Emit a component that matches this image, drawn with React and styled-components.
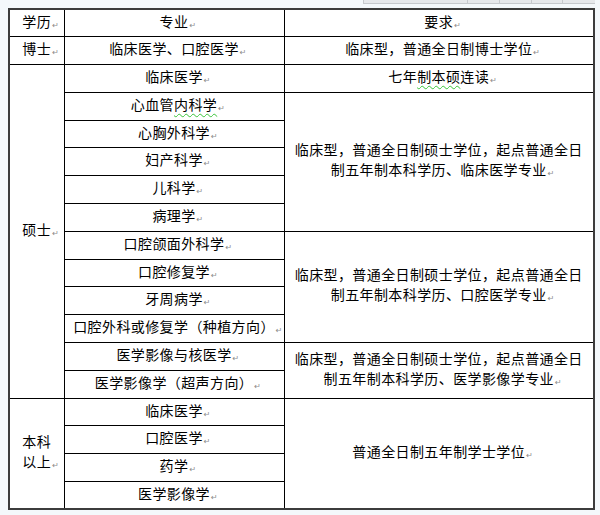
import styled, { createGlobalStyle } from 'styled-components'

const GlobalStyle = createGlobalStyle`
  html, body {
    margin: 0;
    padding: 0;
    background: #f4f8fb;
  }
  body {
    font-family: "Noto Sans CJK SC", "Noto Sans", sans-serif;
  }
`

const Page = styled.div`
  width: 600px;
  height: 515px;
  overflow: hidden;
`

const Ruler = styled.div`
  display: flex;
  height: 4px;
  width: 232px;
  margin-left: 363px;
`

const RulerCell = styled.div`
  flex: 0 0 ${(p) => p.$w}px;
  box-sizing: border-box;
  background: #e6e8eb;
  border-left: 1px solid #c6c9cd;
  border-bottom: 1px solid #c6c9cd;
`

const Table = styled.table`
  margin: 4px 0 0 8px;
  width: 585px;
  border-collapse: collapse;
  table-layout: fixed;
  border: 2px solid #3c3c3c;
`

const Row = styled.tr`
  height: 27.8px;
`

const Cell = styled.td`
  border: 1px solid #000;
  padding: 0 7px;
  text-align: center;
  vertical-align: middle;
  font-size: 14px;
  letter-spacing: 0.4px;
  line-height: 20px;
  color: #000;
  background: #fff;
`

const Squiggle = styled.span`
  text-decoration: underline wavy #39c439;
  text-decoration-thickness: 1px;
  text-underline-offset: 3px;
`

const Mark = styled.span`
  display: inline-block;
  width: 0;
  white-space: nowrap;
  font-family: "DejaVu Sans", sans-serif;
  font-size: 8px;
  letter-spacing: 0;
  color: #8c8c8c;
  vertical-align: -1px;
  &::before {
    content: "↵";
    padding-left: 1px;
  }
`

const Text = ({ children }) => (
  <>
    {children}
    <Mark />
  </>
)

const masterClinical = '临床型，普通全日制硕士学位，起点普通全日制五年制本科学历、'

export default function App() {
  return (
    <Page>
      <GlobalStyle />
      <Ruler>
        <RulerCell $w={104} />
        <RulerCell $w={32} />
        <RulerCell $w={32} />
        <RulerCell $w={31} />
        <RulerCell $w={33} />
      </Ruler>
      <Table>
        <colgroup>
          <col style={{ width: 55 }} />
          <col style={{ width: 220 }} />
          <col style={{ width: 310 }} />
        </colgroup>
        <tbody>
          <Row>
            <Cell><Text>学历</Text></Cell>
            <Cell><Text>专业</Text></Cell>
            <Cell><Text>要求</Text></Cell>
          </Row>
          <Row>
            <Cell><Text>博士</Text></Cell>
            <Cell><Text>临床医学、口腔医学</Text></Cell>
            <Cell><Text>临床型，普通全日制博士学位</Text></Cell>
          </Row>
          <Row>
            <Cell rowSpan={12}><Text>硕士</Text></Cell>
            <Cell><Text>临床医学</Text></Cell>
            <Cell>
              <Text>七年<Squiggle>制本硕</Squiggle>连读</Text>
            </Cell>
          </Row>
          <Row>
            <Cell>
              <Text>心血管<Squiggle>内科学</Squiggle></Text>
            </Cell>
            <Cell rowSpan={5}><Text>{masterClinical}临床医学专业</Text></Cell>
          </Row>
          <Row><Cell><Text>心胸外科学</Text></Cell></Row>
          <Row><Cell><Text>妇产科学</Text></Cell></Row>
          <Row><Cell><Text>儿科学</Text></Cell></Row>
          <Row><Cell><Text>病理学</Text></Cell></Row>
          <Row>
            <Cell><Text>口腔颌面外科学</Text></Cell>
            <Cell rowSpan={4}><Text>{masterClinical}口腔医学专业</Text></Cell>
          </Row>
          <Row><Cell><Text>口腔修复学</Text></Cell></Row>
          <Row><Cell><Text>牙周病学</Text></Cell></Row>
          <Row><Cell><Text>口腔外科或修复学（种植方向）</Text></Cell></Row>
          <Row>
            <Cell><Text>医学影像与核医学</Text></Cell>
            <Cell rowSpan={2}><Text>{masterClinical}医学影像学专业</Text></Cell>
          </Row>
          <Row><Cell><Text>医学影像学（超声方向）</Text></Cell></Row>
          <Row>
            <Cell rowSpan={4}><Text>本科以上</Text></Cell>
            <Cell><Text>临床医学</Text></Cell>
            <Cell rowSpan={4}><Text>普通全日制五年制学士学位</Text></Cell>
          </Row>
          <Row><Cell><Text>口腔医学</Text></Cell></Row>
          <Row><Cell><Text>药学</Text></Cell></Row>
          <Row><Cell><Text>医学影像学</Text></Cell></Row>
        </tbody>
      </Table>
    </Page>
  )
}
